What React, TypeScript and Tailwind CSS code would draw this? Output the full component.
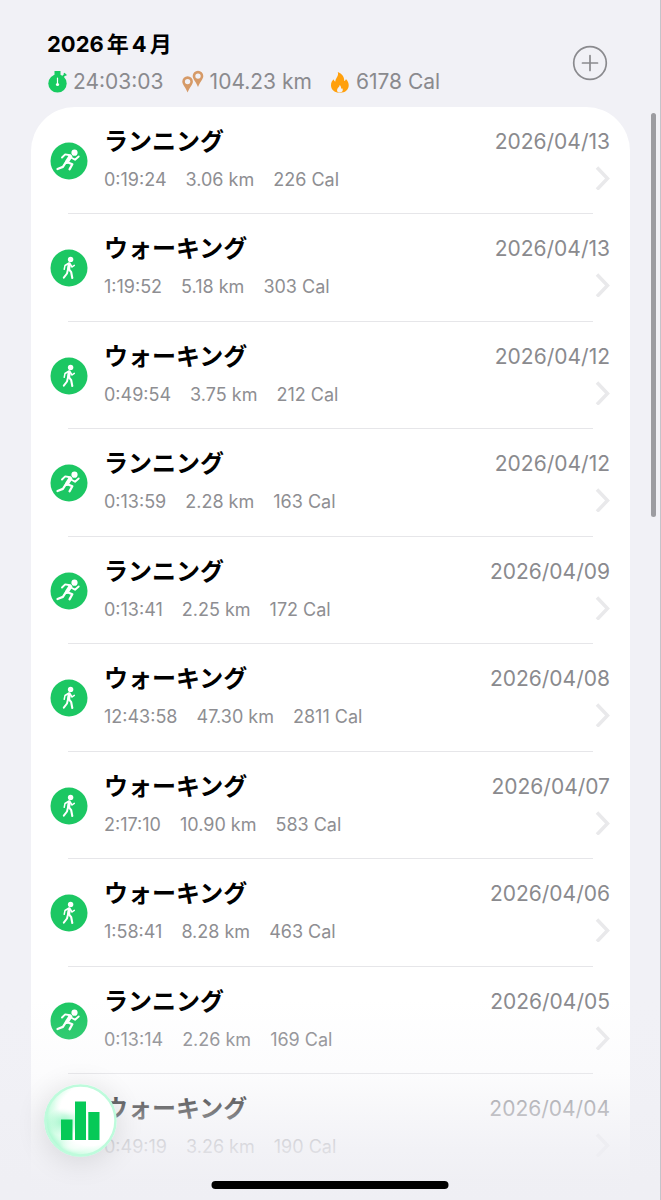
type Activity = 'run' | 'walk';

interface Workout {
    activity: Activity;
    date: string;
    duration: string;
    distance: string;
    calories: string;
}

const workouts: Workout[] = [
    { activity: 'run', date: '2026/04/13', duration: '0:19:24', distance: '3.06 km', calories: '226 Cal' },
    { activity: 'walk', date: '2026/04/13', duration: '1:19:52', distance: '5.18 km', calories: '303 Cal' },
    { activity: 'walk', date: '2026/04/12', duration: '0:49:54', distance: '3.75 km', calories: '212 Cal' },
    { activity: 'run', date: '2026/04/12', duration: '0:13:59', distance: '2.28 km', calories: '163 Cal' },
    { activity: 'run', date: '2026/04/09', duration: '0:13:41', distance: '2.25 km', calories: '172 Cal' },
    { activity: 'walk', date: '2026/04/08', duration: '12:43:58', distance: '47.30 km', calories: '2811 Cal' },
    { activity: 'walk', date: '2026/04/07', duration: '2:17:10', distance: '10.90 km', calories: '583 Cal' },
    { activity: 'walk', date: '2026/04/06', duration: '1:58:41', distance: '8.28 km', calories: '463 Cal' },
    { activity: 'run', date: '2026/04/05', duration: '0:13:14', distance: '2.26 km', calories: '169 Cal' },
    { activity: 'walk', date: '2026/04/04', duration: '0:49:19', distance: '3.26 km', calories: '190 Cal' },
];

const activityLabels: Record<Activity, string> = {
    run: 'ランニング',
    walk: 'ウォーキング',
};

const StopwatchIcon = () => (
    <svg viewBox="0 0 20 24" className="w-5 h-6 shrink-0" aria-hidden="true">
        <circle cx="10.5" cy="13.4" r="9.2" fill="#17cb60" />
        <path d="M7.500 1h6v5h-6z" fill="#17cb60" />
        <path d="M15.500 7l2.500-2.500" stroke="#17cb60" strokeWidth="1.800" />
        <path d="M17 3.200l2.300 2.300" stroke="#17cb60" strokeWidth="1.600" />
        <path d="M10.500 8v6" stroke="#fff" strokeWidth="1.200" strokeLinecap="round" />
        <circle cx="10.500" cy="14.500" r="1.600" fill="#fff" />
    </svg>
);

const PinsIcon = () => (
    <svg viewBox="0 0 22 24" className="w-[22px] h-6 shrink-0" fill="#d69a67" fillRule="evenodd" aria-hidden="true">
        <path d="M5.600 6.300a5.300 5.300 0 0 1 5.300 5.300c0 3-3.300 6-5.300 11-2-5-5.300-8-5.300-11a5.300 5.300 0 0 1 5.300-5.300zM5.600 8.900a2.700 2.700 0 1 0 0 5.400 2.700 2.700 0 0 0 0-5.400z" />
        <path d="M16 .8a5.300 5.300 0 0 1 5.300 5.300c0 3-3.300 6-5.300 11-2-5-5.300-8-5.300-11A5.300 5.300 0 0 1 16 .8zM16 3.400a2.700 2.700 0 1 0 0 5.400 2.700 2.700 0 0 0 0-5.400z" />
    </svg>
);

const FlameIcon = () => (
    <svg viewBox="0 0 20 24" className="w-5 h-6 shrink-0" aria-hidden="true">
        <path
            d="M7.800 2c4.200 1.500 6.600 4.800 6.400 8.900 1-.3 1.500-1 1.700-2 2 1.800 3 4.300 2.800 6.800-.3 4.200-3.500 7-8.600 7-5.300 0-9-2.900-9.100-7.300-.1-2.700 1.100-4.700 2.700-6.100.1 1.200.7 2 1.700 2.300C5.200 8 9.200 6.400 7.800 2z"
            fill="#ffa00d"
        />
        <path d="M9.700 15c-.1 2.300-2.700 2.800-2.700 5.200 0 1.500 1.200 2.300 2.800 2.300s3-.8 3-2.400c0-.8-.3-1.500-.8-2.100-.2.500-.5.800-.9.900.2-1.500-.3-2.900-1.400-3.900z" fill="#f1f1f6" />
    </svg>
);

const ActivityIcon = ({ activity }: { activity: Activity }) => (
    <svg viewBox="0 0 38 38" className="size-[38px] shrink-0" fill="none" stroke="#fff" strokeLinecap="round" strokeLinejoin="round" aria-hidden="true">
        <circle cx="19" cy="19" r="18.500" fill="#1cc763" stroke="none" />
        {activity === 'run' ? (
            <>
                <circle cx="24.500" cy="10.700" r="3.100" fill="#fff" stroke="none" />
                <path d="M20.300 14.700L16.800 20" strokeWidth="4" />
                <path d="M20 13.300L15.200 12.400L12 15.500" strokeWidth="1.900" />
                <path d="M21.500 15.700L25 17.800L28.700 14.500" strokeWidth="1.900" />
                <path d="M17.500 20.300L22.300 22.300L19.600 27.300" strokeWidth="2.300" />
                <path d="M15.600 20.700L12.900 24.900L7.500 27" strokeWidth="2.200" />
            </>
        ) : (
            <>
                <circle cx="20.600" cy="10.400" r="2.700" fill="#fff" stroke="none" />
                <path d="M19.300 14.900L18.600 19.800" strokeWidth="3.200" />
                <path d="M18.300 14.500L15 16.500L14.200 20.300" strokeWidth="1.500" />
                <path d="M20.500 15.500L22 18L24.300 16.400" strokeWidth="1.500" />
                <path d="M19 20.300L21.200 23.200L22.300 29" strokeWidth="2.100" />
                <path d="M17.900 20.600L17 24.500L13.800 28.600" strokeWidth="2" />
            </>
        )}
    </svg>
);

const WorkoutRow = ({ workout }: { workout: Workout }) => (
    <li className="group">
        <a href="#" className="flex gap-4 pr-5 pl-[19px] pt-[19px] pb-[21px] group-even:pb-[22px]">
            <span className="flex items-center pt-1">
                <ActivityIcon activity={workout.activity} />
            </span>
            <span className="flex flex-1 flex-col gap-2.5">
                <span className="text-2xl leading-8 font-bold text-black">{activityLabels[workout.activity]}</span>
                <span className="flex gap-[19px] text-lg leading-6 text-[#8e8e92]">
                    <span>{workout.duration}</span>
                    <span>{workout.distance}</span>
                    <span>{workout.calories}</span>
                </span>
            </span>
            <span className="flex flex-col items-end gap-2">
                <span className="text-[21px] leading-8 text-[#8a8a8e]">{workout.date}</span>
                <svg viewBox="0 0 15 24" className="h-6 w-[15px]" fill="none" stroke="#e9e9eb" strokeWidth="3.500" aria-hidden="true">
                    <path d="M2 1.500L12.500 12.500L2 23.500" />
                </svg>
            </span>
        </a>
        <hr className="mx-[37px] h-px border-0 bg-[#e6e6e9]" />
    </li>
);

const App = () => {
    return (
        <main className="relative h-screen overflow-hidden border-r border-[#c4c4ca] bg-[#f1f1f6] font-['Inter','Noto_Sans_CJK_JP',sans-serif]">
            <header className="flex items-start justify-between pt-7 pr-[52px] pl-[47px]">
                <div>
                    <h1 className="flex gap-[3px] text-[22px] leading-8 font-bold text-black">
                        <span>2026</span>
                        <span>年</span>
                        <span>4</span>
                        <span>月</span>
                    </h1>
                    <div className="mt-1.5 mb-2.5 flex gap-[18px] text-[21px] leading-[31px] text-[#8a8a8e]">
                        <span className="flex items-center gap-1.5">
                            <StopwatchIcon />
                            24:03:03
                        </span>
                        <span className="flex items-center gap-1.5">
                            <PinsIcon />
                            104.23 km
                        </span>
                        <span className="flex items-center gap-1.5">
                            <FlameIcon />
                            6178 Cal
                        </span>
                    </div>
                </div>
                <button type="button" aria-label="追加" className="mt-[17px]">
                    <svg viewBox="0 0 36 36" className="size-9" fill="none" stroke="#8a8a8e" strokeWidth="1.700" strokeLinecap="round">
                        <circle cx="18" cy="18" r="16.300" />
                        <path d="M18 10.500v15M10.500 18h15" />
                    </svg>
                </button>
            </header>

            <ul className="mr-[30px] ml-[31px] rounded-t-[44px] bg-white pb-10">
                {workouts.map((workout, i) => (
                    <WorkoutRow key={i} workout={workout} />
                ))}
            </ul>

            {/* Scroll indicator */}
            <div className="absolute top-[113px] right-1 h-[404px] w-[5px] rounded-full bg-[#9c9ca1]" />

            {/* Bottom fade */}
            <div className="pointer-events-none absolute inset-x-0 bottom-0 h-[200px] bg-[linear-gradient(to_bottom,#efeff400_0%,#efeff433_37%,#efeff480_55%,#efeff4cc_74%,#efeff4fa_90%,#efeff4_100%)]" />

            <button
                type="button"
                aria-label="統計"
                className="absolute bottom-[43px] left-11 flex size-[73px] items-center justify-center rounded-full shadow-[0_4px_30px_rgba(0,0,0,0.12)]"
            >
                <svg viewBox="0 0 73 73" className="size-full" aria-hidden="true">
                    <defs>
                        <radialGradient id="glass" cx="0.64" cy="0.42" r="0.66">
                            <stop offset="0.65" stopColor="#fff" />
                            <stop offset="0.85" stopColor="#d3fde6" />
                            <stop offset="1" stopColor="#9ff9cb" />
                        </radialGradient>
                        <radialGradient id="tint">
                            <stop offset="0" stopColor="#8ff5c0" stopOpacity="0.9" />
                            <stop offset="1" stopColor="#8ff5c0" stopOpacity="0" />
                        </radialGradient>
                        <radialGradient id="shine">
                            <stop offset="0.3" stopColor="#fff" />
                            <stop offset="1" stopColor="#fff" stopOpacity="0" />
                        </radialGradient>
                    </defs>
                    <circle cx="36.500" cy="36.500" r="36" fill="url(#glass)" />
                    <ellipse cx="20" cy="38" rx="18" ry="14" fill="url(#tint)" />
                    <ellipse cx="27" cy="20" rx="17" ry="12" fill="url(#shine)" />
                    <ellipse cx="30" cy="62" rx="15" ry="7" fill="url(#shine)" opacity="0.600" />
                    <circle cx="36.500" cy="36.500" r="35" fill="none" stroke="#befbdc" strokeWidth="2.500" />
                    <path d="M17 35.500h11.500V56H17zM31 17.500h11V56H31zM44.300 28h11.200v28H44.300z" fill="#06c957" />
                </svg>
            </button>

            {/* Home indicator */}
            <div className="absolute bottom-[11px] left-1/2 h-2 w-[237px] -translate-x-1/2 rounded-full bg-black" />
        </main>
    );
};

export default App;
